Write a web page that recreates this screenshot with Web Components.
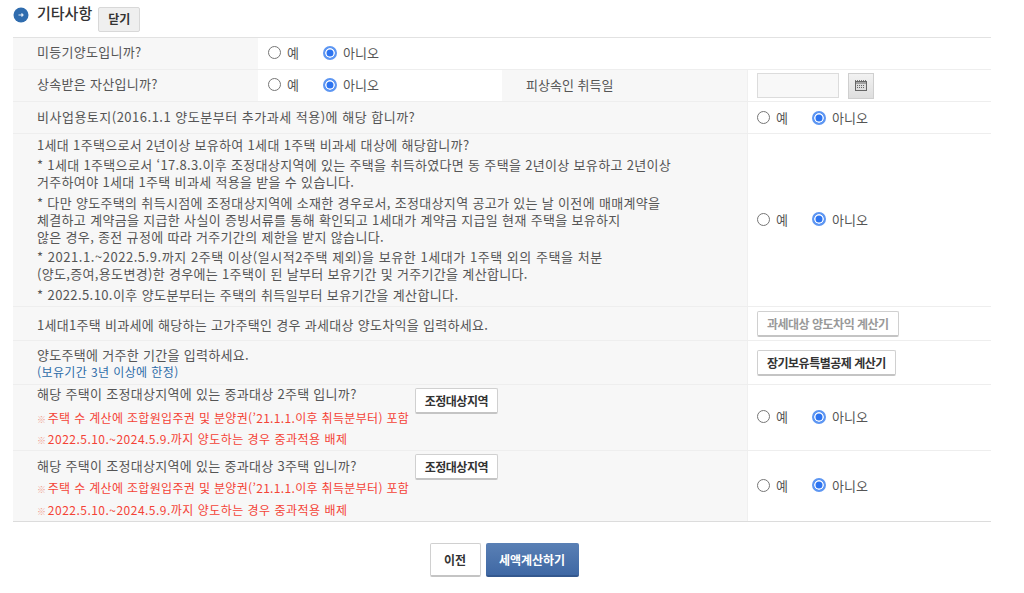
<!DOCTYPE html>
<html lang="ko">
<head>
<meta charset="utf-8">
<title>기타사항</title>
<style>
  html, body { margin: 0; background: #fff; }
  body { font-family: "Noto Sans CJK KR", "Noto Sans", sans-serif; color: #555; font-size: 13px; }
</style>
</head>
<body>
<tax-form>
  <section-head slot="head">기타사항</section-head>

  <form-row cols="245px 244px 245px 244px" h="32">
    <form-cell pad="24" pb="4">미등기양도입니까?</form-cell>
    <form-cell white span="3" pb="2"><yes-no></yes-no></form-cell>
  </form-row>
  <form-row cols="245px 244px 245px 244px" h="32">
    <form-cell pad="24" pb="4">상속받은 자산입니까?</form-cell>
    <form-cell white pb="2"><yes-no></yes-no></form-cell>
    <form-cell pad="24" pb="2" track="0">피상속인 취득일</form-cell>
    <form-cell white line><date-field></date-field></form-cell>
  </form-row>
  <form-row h="32">
    <form-cell pad="24" pb="2" track="0.5">비사업용토지(2016.1.1 양도분부터 추가과세 적용)에 해당 합니까?</form-cell>
    <form-cell white line><yes-no></yes-no></form-cell>
  </form-row>
  <form-row h="173">
    <form-cell pad="24" pb="2"><note-list>
      <p>1세대 1주택으로서 2년이상 보유하여 1세대 1주택 비과세 대상에 해당합니까?</p>
      <p>* 1세대 1주택으로서 ‘17.8.3.이후 조정대상지역에 있는 주택을 취득하였다면 동 주택을 2년이상 보유하고 2년이상<br>거주하여야 1세대 1주택 비과세 적용을 받을 수 있습니다.</p>
      <p>* 다만 양도주택의 취득시점에 조정대상지역에 소재한 경우로서, 조정대상지역 공고가 있는 날 이전에 매매계약을<br>체결하고 계약금을 지급한 사실이 증빙서류를 통해 확인되고 1세대가 계약금 지급일 현재 주택을 보유하지<br>않은 경우, 종전 규정에 따라 거주기간의 제한을 받지 않습니다.</p>
      <p><span style="letter-spacing:.54px">* 2021.1.~2022.5.9.까지 2주택 이상(일시적2주택 제외)을 보유한 1세대가 1주택 외의 주택을 처분</span><br>(양도,증여,용도변경)한 경우에는 1주택이 된 날부터 보유기간 및 거주기간을 계산합니다.</p>
      <p style="letter-spacing:.4px">* 2022.5.10.이후 양도분부터는 주택의 취득일부터 보유기간을 계산합니다.</p>
    </note-list></form-cell>
    <form-cell white line pb="2"><yes-no></yes-no></form-cell>
  </form-row>
  <form-row h="34">
    <form-cell pad="24" pt="2">1세대1주택 비과세에 해당하는 고가주택인 경우 과세대상 양도차익을 입력하세요.</form-cell>
    <form-cell white line><plain-button dim>과세대상 양도차익 계산기</plain-button></form-cell>
  </form-row>
  <form-row h="44">
    <form-cell pad="24" pt="2"><two-lines>양도주택에 거주한 기간을 입력하세요.<span slot="sub">(보유기간 3년 이상에 한정)</span></two-lines></form-cell>
    <form-cell white line><plain-button>장기보유특별공제 계산기</plain-button></form-cell>
  </form-row>
  <form-row h="66">
    <form-cell pad="24"><heavy-question n="2" top="0" head="18.5" lh="21"></heavy-question></form-cell>
    <form-cell white line pb="2"><yes-no></yes-no></form-cell>
  </form-row>
  <form-row h="71" last>
    <form-cell pad="24"><heavy-question n="3" top="6" head="22.5" lh="22"></heavy-question></form-cell>
    <form-cell white line pb="2"><yes-no></yes-no></form-cell>
  </form-row>

  <form-actions slot="actions"></form-actions>
</tax-form>

<script>
class TaxForm extends HTMLElement {
  constructor() {
    super();
    this.attachShadow({ mode: 'open' }).innerHTML = `
      <style>
        :host { display: block; padding: 0 33px 0 13px; }
        .rows { border-top: 1px solid #e2e2e2; }
      </style>
      <slot name="head"></slot>
      <div class="rows"><slot></slot></div>
      <slot name="actions"></slot>`;
  }
}

class SectionHead extends HTMLElement {
  constructor() {
    super();
    this.attachShadow({ mode: 'open' }).innerHTML = `
      <style>
        :host { display: flex; height: 37px; align-items: flex-start; }
        svg { margin: 7px 6px 0 0; }
        b { font-size: 15px; font-weight: 500; color: #333; line-height: 18px; margin: 4px 6px 0 2px; }
        button { width: 42px; height: 25px; margin-top: 7px; padding: 0 0 2px; border: 1px solid #d8d8d8; border-radius: 2px;
          background: #efefef; font: 700 12px "Noto Sans CJK KR", sans-serif; color: #333; }
      </style>
      <svg width="16" height="16" viewBox="0 0 16 16">
        <circle cx="8" cy="8" r="7.5" fill="#2f6cae"/>
        <path d="M5.5 8h4.5M8.5 6.5 10 8 8.5 9.5" fill="none" stroke="#dfeaf5" stroke-width="1.2"/>
      </svg>
      <b><slot></slot></b>
      <button type="button">닫기</button>`;
  }
}

class FormRow extends HTMLElement {
  constructor() {
    super();
    const cols = this.getAttribute('cols') || '734px 244px';
    const h = this.getAttribute('h');
    this.attachShadow({ mode: 'open' }).innerHTML = `
      <style>
        :host { display: grid; grid-template-columns: ${cols}; height: ${h}px; box-sizing: border-box;
          background: #f7f7f7; border-bottom: 1px solid #eeeeee; }
        :host([last]) { border-bottom-color: #dcdcdc; }
      </style>
      <slot></slot>`;
  }
}

class FormCell extends HTMLElement {
  constructor() {
    super();
    const pad = this.getAttribute('pad') || 10;
    const span = this.getAttribute('span') || 1;
    const pb = this.getAttribute('pb') || 0;
    const pt = this.getAttribute('pt') || 0;
    const track = this.getAttribute('track') || 0.3;
    this.attachShadow({ mode: 'open' }).innerHTML = `
      <style>
        :host { display: flex; align-items: center; min-width: 0; box-sizing: border-box;
          padding: ${pt}px 0 ${pb}px ${pad}px; grid-column: span ${span}; color: #555; font-size: 13px; letter-spacing: ${track}px; }
        :host([white]) { background: #fff; }
        :host([line]) { border-left: 1px solid #f0f0f0; padding-left: ${pad - 1}px; }
      </style>
      <slot></slot>`;
  }
}

class YesNo extends HTMLElement {
  constructor() {
    super();
    this.attachShadow({ mode: 'open' }).innerHTML = `
      <style>
        :host { display: flex; align-items: center; gap: 6px; font-size: 13px; color: #555; letter-spacing: 0; }
        i { box-sizing: border-box; width: 13px; height: 13px; border-radius: 50%; border: 1px solid #767676; background: #fff; }
        i.on { width: 14px; height: 14px; border: 2px solid #5d96f2; box-shadow: inset 0 0 0 1.5px #fff; background: #2d74f0; }
        span.yes { margin-right: 18px; }
      </style>
      <i></i><span class="yes">예</span>
      <i class="on"></i><span>아니오</span>`;
  }
}

class DateField extends HTMLElement {
  constructor() {
    super();
    this.attachShadow({ mode: 'open' }).innerHTML = `
      <style>
        :host { display: flex; gap: 9px; }
        .box { width: 82px; height: 25px; box-sizing: border-box; border: 1px solid #dcdcdc; background: #f8f8f8; }
        .cal { width: 26px; height: 26px; box-sizing: border-box; border: 1px solid #cfcfcf; background: linear-gradient(#f2f2f2, #dedede);
          display: flex; align-items: center; justify-content: center; }
      </style>
      <div class="box"></div>
      <div class="cal">
        <svg width="12" height="11" viewBox="0 0 12 11">
          <path d="M0 0.5h12" stroke="#777" stroke-dasharray="1 1"/>
          <rect x="0.5" y="1.5" width="11" height="9" fill="#ddd" stroke="#666"/>
          <path d="M1 3h10" stroke="#666"/>
          <path d="M2 5.5h8M2 7.5h8" stroke="#666" stroke-dasharray="1 1"/>
        </svg>
      </div>`;
  }
}

class NoteList extends HTMLElement {
  constructor() {
    super();
    this.attachShadow({ mode: 'open' }).innerHTML = `
      <style>
        :host { display: block; font-size: 13px; line-height: 17px; color: #555; letter-spacing: 0.33px; }
        ::slotted(p) { margin: 0 0 3.5px; }
        ::slotted(p:last-child) { margin-bottom: 0; }
      </style>
      <slot></slot>`;
  }
}

class TwoLines extends HTMLElement {
  constructor() {
    super();
    this.attachShadow({ mode: 'open' }).innerHTML = `
      <style>
        :host { display: block; line-height: 17px; }
        div { color: #2d6ca8; font-size: 12px; line-height: 18px; letter-spacing: 0.4px; }
      </style>
      <slot></slot><div><slot name="sub"></slot></div>`;
  }
}

class PlainButton extends HTMLElement {
  constructor() {
    super();
    this.attachShadow({ mode: 'open' }).innerHTML = `
      <style>
        :host { display: inline-block; letter-spacing: 0; }
        button { height: 26px; padding: 0 9px; background: #fff; border: 1px solid #d0d0d0; border-bottom: 2px solid #c4c4c4;
          border-radius: 2px; font: 700 12px "Noto Sans CJK KR", sans-serif; letter-spacing: -0.5px; color: #333; white-space: nowrap; }
        :host([dim]) button { color: #999; }
      </style>
      <button type="button"><slot></slot></button>`;
  }
}

class HeavyQuestion extends HTMLElement {
  constructor() {
    super();
    const n = this.getAttribute('n');
    const top = this.getAttribute('top');
    const head = this.getAttribute('head');
    const lh = this.getAttribute('lh');
    this.attachShadow({ mode: 'open' }).innerHTML = `
      <style>
        :host { display: block; align-self: flex-start; padding-top: 3px; font-size: 13px; color: #555; }
        .top { display: flex; justify-content: space-between; width: 461px; align-items: flex-start; height: ${head}px; }
        .top span { line-height: 18px; margin-top: ${Number(top) - 3}px; }
        .red { color: #f44336; font-size: 12px; line-height: ${lh}px; height: ${lh}px; letter-spacing: 0.33px; }
        .red + .red { letter-spacing: 0.48px; }
        .red small { color: #f0a090; font-size: 9px; line-height: 0; letter-spacing: 0; margin-right: -2px; }
      </style>
      <div class="top"><span>해당 주택이 조정대상지역에 있는 중과대상 ${n}주택 입니까?</span><plain-button>조정대상지역</plain-button></div>
      <div class="red"><small>※</small> 주택 수 계산에 조합원입주권 및 분양권(’21.1.1.이후 취득분부터) 포함</div>
      <div class="red"><small>※</small> 2022.5.10.~2024.5.9.까지 양도하는 경우 중과적용 배제</div>`;
  }
}

class FormActions extends HTMLElement {
  constructor() {
    super();
    this.attachShadow({ mode: 'open' }).innerHTML = `
      <style>
        :host { display: flex; justify-content: center; gap: 5px; padding: 21px 0 0 4px; }
        button { height: 34px; border-radius: 2px; font: 700 12px "Noto Sans CJK KR", sans-serif; padding: 0; }
        .prev { width: 51px; background: #fff; color: #333; border: 1px solid #d0d0d0; border-bottom: 2px solid #c4c4c4; }
        .next { width: 93px; background: linear-gradient(#5a80b5, #3f68a4); color: #fff; border: 0; border-bottom: 2px solid #34588e; }
      </style>
      <button type="button" class="prev">이전</button>
      <button type="button" class="next">세액계산하기</button>`;
  }
}

customElements.define('tax-form', TaxForm);
customElements.define('section-head', SectionHead);
customElements.define('form-row', FormRow);
customElements.define('form-cell', FormCell);
customElements.define('yes-no', YesNo);
customElements.define('date-field', DateField);
customElements.define('note-list', NoteList);
customElements.define('two-lines', TwoLines);
customElements.define('plain-button', PlainButton);
customElements.define('heavy-question', HeavyQuestion);
customElements.define('form-actions', FormActions);
</script>
</body>
</html>
